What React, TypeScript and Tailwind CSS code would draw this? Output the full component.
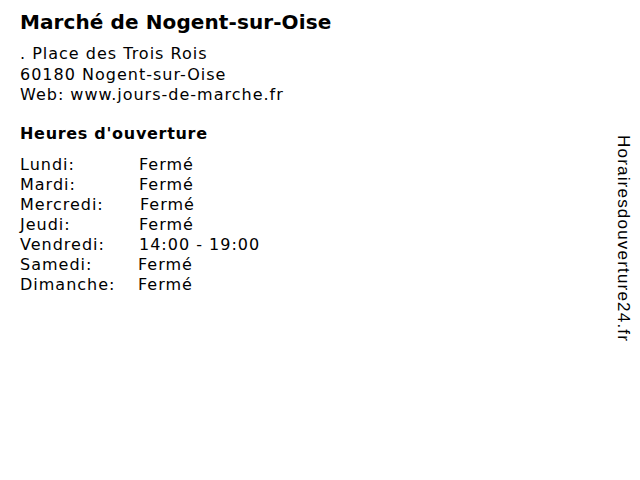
const hours: { day: string; time: string; w: string }[] = [
  { day: 'Lundi:', time: 'Fermé', w: 'w-[119px]' },
  { day: 'Mardi:', time: 'Fermé', w: 'w-[119px]' },
  { day: 'Mercredi:', time: 'Fermé', w: 'w-[120px]' },
  { day: 'Jeudi:', time: 'Fermé', w: 'w-[119px]' },
  { day: 'Vendredi:', time: '14:00 - 19:00', w: 'w-[119px]' },
  { day: 'Samedi:', time: 'Fermé', w: 'w-[118px]' },
  { day: 'Dimanche:', time: 'Fermé', w: 'w-[118px]' },
];

export default function App() {
  return (
    <div className="flex w-[640px] h-[480px] bg-white text-black font-['DejaVu_Sans',sans-serif]">
      <div className="flex-1 pl-5 pt-[9px]">
        <h1 className="text-[20px] font-bold leading-[26px] tracking-[0.1px]">Marché de Nogent-sur-Oise</h1>
        <div className="mt-[9px] text-[16px] leading-[20.5px] tracking-[1px]">
          <div>. Place des Trois Rois</div>
          <div>60180 Nogent-sur-Oise</div>
          <div>Web: www.jours-de-marche.fr</div>
        </div>
        <h2 className="mt-[18px] text-[16px] font-bold leading-[20px] tracking-[0.7px]">Heures d'ouverture</h2>
        <div className="mt-[11px] text-[16px] leading-[20px] tracking-[1px]">
          {hours.map(h => (
            <div key={h.day} className="flex">
              <span className={h.w}>{h.day}</span>
              <span>{h.time}</span>
            </div>
          ))}
        </div>
      </div>
      <div className="w-[40px] pt-[135px] pl-[13px]">
        <div className="[writing-mode:vertical-rl] font-['Liberation_Sans',sans-serif] text-[17px] leading-[20px] tracking-[1.2px]">
          Horairesdouverture24.fr
        </div>
      </div>
    </div>
  );
}
